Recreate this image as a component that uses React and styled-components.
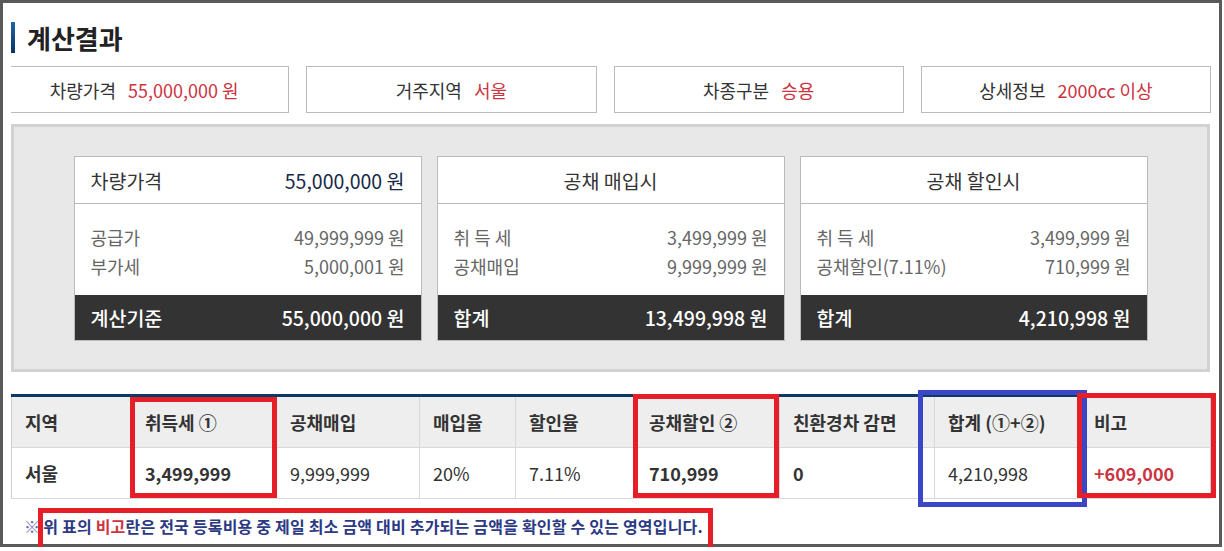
import React from 'react';
import styled, { createGlobalStyle } from 'styled-components';

const GlobalStyle = createGlobalStyle`
  html, body {
    margin: 0;
    padding: 0;
    background: #fff;
  }
  body {
    font-family: "Noto Sans CJK KR", "Noto Sans", sans-serif;
    color: #333;
  }
`;

const Frame = styled.div`
  box-sizing: border-box;
  width: 1222px;
  height: 547px;
  border: 3px solid #5a5a5a;
  padding: 0 9px 0 8px;
  display: flex;
  flex-direction: column;
`;

const Title = styled.h2`
  margin: 19px 0 0;
  height: 31px;
  display: flex;
  align-items: center;
  gap: 12px;
  font-size: 26px;
  font-weight: 700;
  color: #222;
  &::before {
    content: '';
    width: 4px;
    align-self: stretch;
    background: linear-gradient(#2064a8, #0a3462);
  }
`;

const InfoClip = styled.div`
  margin: 13px -1px 0 0;
  overflow: hidden;
`;

const InfoRow = styled.div`
  margin-left: -12px;
  width: 1212px;
  display: grid;
  grid-template-columns: repeat(4, 1fr);
  gap: 17px;
`;

const InfoBox = styled.div`
  box-sizing: border-box;
  height: 47px;
  border: 1px solid #bbb;
  display: flex;
  align-items: center;
  justify-content: center;
  gap: 12px;
  font-size: 18px;
  color: #333;
`;

const InfoValue = styled.span`
  color: #cc3441;
`;

const Summary = styled.div`
  margin-top: 11px;
  border: 3px solid #d2d2d2;
  background: #e8e8e8;
  padding: 29px 0 28px;
  display: flex;
  justify-content: center;
  gap: 15px;
`;

const Card = styled.div`
  box-sizing: border-box;
  width: 348px;
  border: 1px solid #bbb;
  background: #fff;
  display: flex;
  flex-direction: column;
`;

const CardHead = styled.div`
  height: 46px;
  border-bottom: 1px solid #bbb;
  padding: 0 16px;
  display: flex;
  align-items: center;
  justify-content: ${p => (p.$center ? 'center' : 'space-between')};
  font-size: 19.5px;
  color: #333;
`;

const HeadValue = styled.span`
  color: #16284a;
`;

const CardBody = styled.div`
  height: 91px;
  box-sizing: border-box;
  padding: 19px 16px 14px;
`;

const Line = styled.div`
  display: flex;
  justify-content: space-between;
  line-height: 29px;
  font-size: 18px;
  color: #666;
`;

const CardFoot = styled.div`
  height: 45px;
  background: #333;
  color: #fff;
  padding: 0 16px;
  display: flex;
  align-items: center;
  justify-content: space-between;
  font-size: 19.5px;
  font-weight: 500;
`;

const TableWrap = styled.div`
  position: relative;
  margin-top: 22px;
`;

const Table = styled.table`
  width: 1199px;
  table-layout: fixed;
  border-collapse: collapse;
  border-top: 3px solid #0b3a66;
  font-size: 18px;
`;

const Th = styled.th`
  height: 50px;
  padding: 0 12px 0 13px;
  background: #eee;
  text-align: left;
  font-weight: 700;
  color: #333;
  border-left: 1px solid #d8d8d8;
  border-bottom: 1px solid #d8d8d8;
  white-space: nowrap;
  &:first-child { border-left-color: #ccc; }
  &:last-child { border-right: 1px solid #ccc; }
`;

const Td = styled.td`
  height: 50px;
  padding: 0 12px 0 13px;
  text-align: left;
  font-weight: ${p => (p.$bold ? 700 : 400)};
  color: ${p => (p.$red ? '#cc3441' : '#333')};
  border-left: 1px solid #d8d8d8;
  border-bottom: 1px solid #d8d8d8;
  &:first-child { border-left-color: #ccc; }
  &:last-child { border-right: 1px solid #ccc; }
`;

const Mark = styled.div`
  position: absolute;
  box-sizing: border-box;
  border: 5px solid ${p => p.$color};
  pointer-events: none;
`;

const Note = styled.p`
  position: relative;
  margin: 0;
  padding: 16px 0 0 13px;
  line-height: 22px;
  font-size: 16px;
  font-weight: 700;
  letter-spacing: 0.2px;
  color: #2c3984;
  white-space: nowrap;
`;

const NoteSign = styled.span`
  font-weight: 400;
  color: #6a70ad;
  margin-right: 3px;
`;

const NoteRed = styled.span`
  color: #cc3441;
`;

const RED = '#e61e27';
const BLUE = '#3c45c6';

const info = [
  ['차량가격', '55,000,000 원'],
  ['거주지역', '서울'],
  ['차종구분', '승용'],
  ['상세정보', '2000cc 이상'],
];

const cols = [120, 145, 143, 96, 120, 144, 155, 146, 130];

const heads = ['지역', '취득세 ①', '공채매입', '매입율', '할인율', '공채할인 ②', '친환경차 감면', '합계 (①+②)', '비고'];

const marks = [
  { color: RED, left: 119, top: 3, width: 147, height: 101 },
  { color: RED, left: 622, top: 0, width: 146, height: 104 },
  { color: BLUE, left: 907, top: -4, width: 169, height: 117 },
  { color: RED, left: 1066, top: -1, width: 139, height: 105 },
];

export default function App() {
  return (
    <>
      <GlobalStyle />
      <Frame>
        <Title>계산결과</Title>

        <InfoClip>
          <InfoRow>
            {info.map(([label, value]) => (
              <InfoBox key={label}>
                <span>{label}</span>
                <InfoValue>{value}</InfoValue>
              </InfoBox>
            ))}
          </InfoRow>
        </InfoClip>

        <Summary>
          <Card>
            <CardHead>
              <span>차량가격</span>
              <HeadValue>55,000,000 원</HeadValue>
            </CardHead>
            <CardBody>
              <Line><span>공급가</span><span>49,999,999 원</span></Line>
              <Line><span>부가세</span><span>5,000,001 원</span></Line>
            </CardBody>
            <CardFoot>
              <span>계산기준</span>
              <span>55,000,000 원</span>
            </CardFoot>
          </Card>
          <Card>
            <CardHead $center>공채 매입시</CardHead>
            <CardBody>
              <Line><span>취 득 세</span><span>3,499,999 원</span></Line>
              <Line><span>공채매입</span><span>9,999,999 원</span></Line>
            </CardBody>
            <CardFoot>
              <span>합계</span>
              <span>13,499,998 원</span>
            </CardFoot>
          </Card>
          <Card>
            <CardHead $center>공채 할인시</CardHead>
            <CardBody>
              <Line><span>취 득 세</span><span>3,499,999 원</span></Line>
              <Line><span>공채할인(7.11%)</span><span>710,999 원</span></Line>
            </CardBody>
            <CardFoot>
              <span>합계</span>
              <span>4,210,998 원</span>
            </CardFoot>
          </Card>
        </Summary>

        <TableWrap>
          <Table>
            <colgroup>
              {cols.map((w, i) => <col key={i} style={{ width: w }} />)}
            </colgroup>
            <thead>
              <tr>
                {heads.map(h => <Th key={h}>{h}</Th>)}
              </tr>
            </thead>
            <tbody>
              <tr>
                <Td $bold>서울</Td>
                <Td $bold>3,499,999</Td>
                <Td>9,999,999</Td>
                <Td>20%</Td>
                <Td>7.11%</Td>
                <Td $bold>710,999</Td>
                <Td $bold>0</Td>
                <Td>4,210,998</Td>
                <Td $bold $red>+609,000</Td>
              </tr>
            </tbody>
          </Table>
          {marks.map((m, i) => (
            <Mark
              key={i}
              $color={m.color}
              style={{ left: m.left, top: m.top, width: m.width, height: m.height }}
            />
          ))}
        </TableWrap>

        <Note>
          <NoteSign>※</NoteSign>
          위 표의 <NoteRed>비고</NoteRed>란은 전국 등록비용 중 제일 최소 금액 대비 추가되는 금액을 확인할 수 있는 영역입니다.
          <Mark $color={RED} style={{ left: 27, top: 9, width: 675, height: 44 }} />
        </Note>
      </Frame>
    </>
  );
}
